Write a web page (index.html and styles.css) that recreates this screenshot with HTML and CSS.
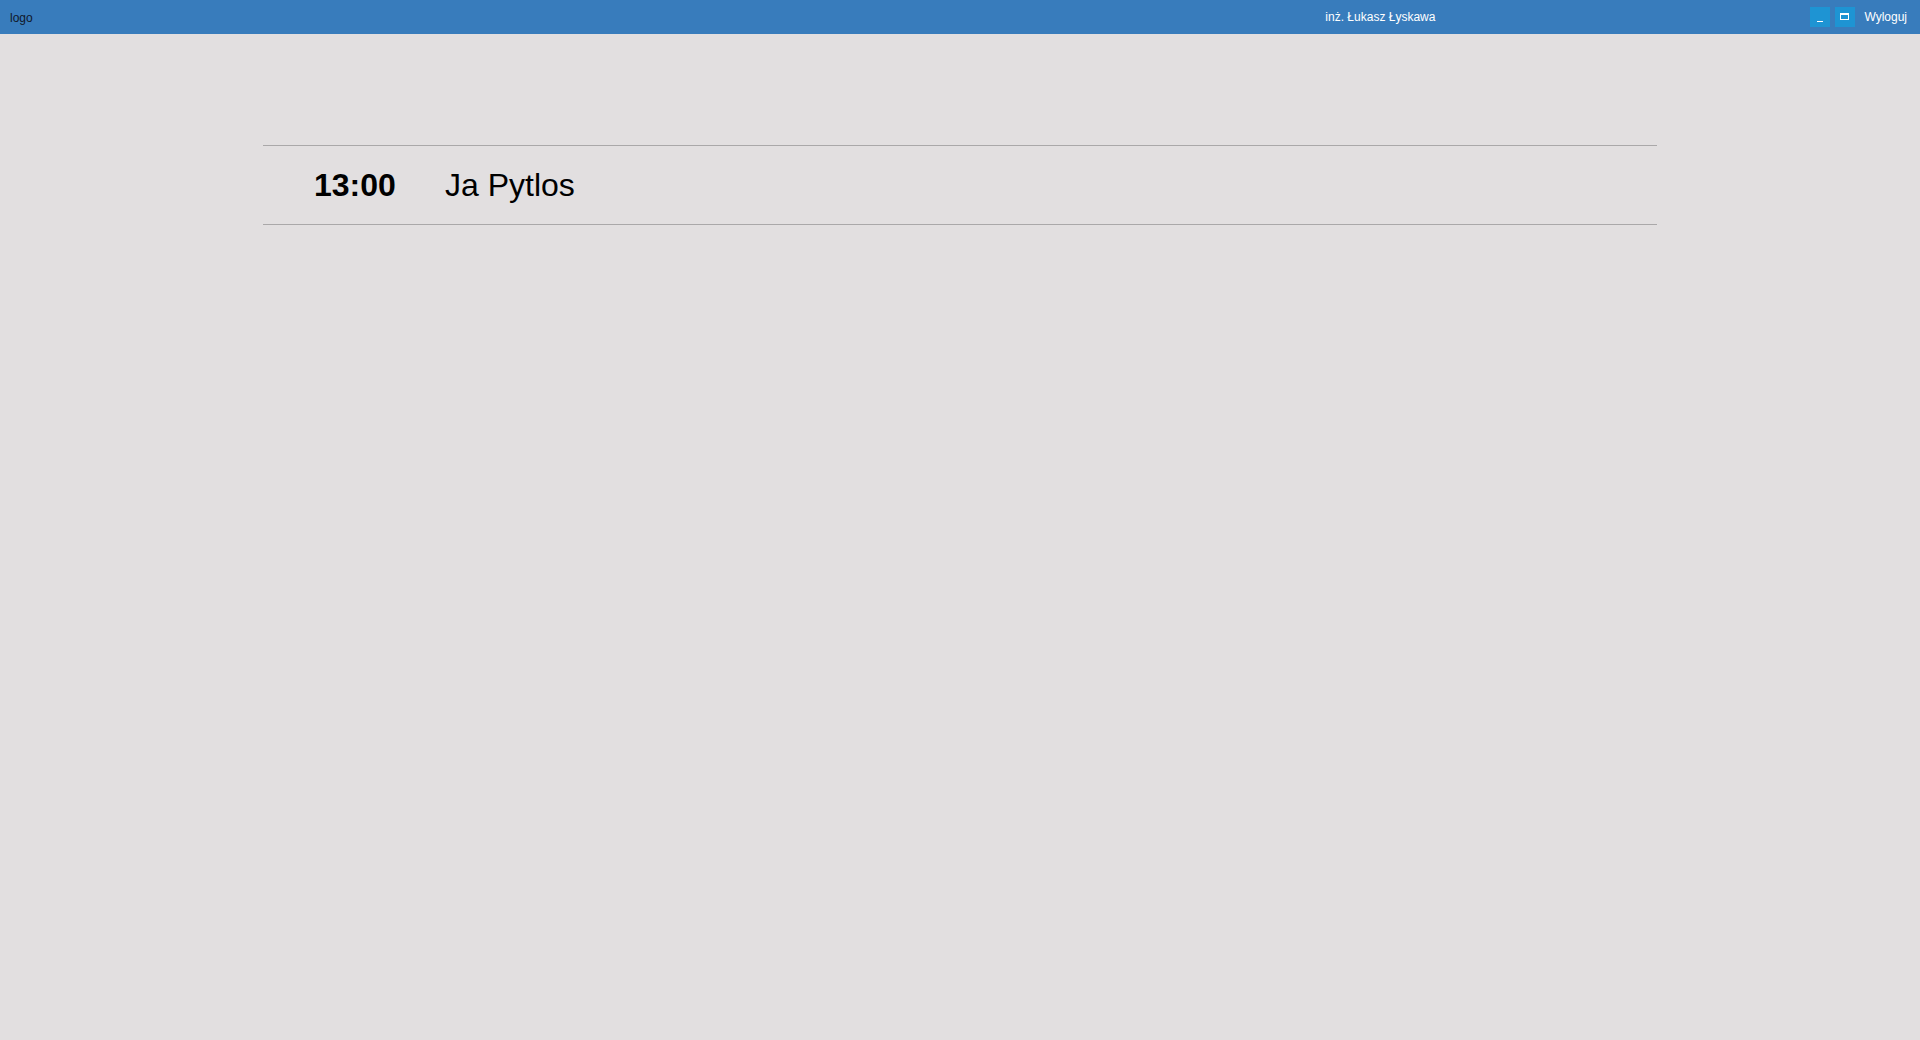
FILE: index.html
```html
<!DOCTYPE html>
<html lang="pl">
<head>
<meta charset="utf-8">
<title>Plan</title>
<link rel="stylesheet" href="styles.css">
</head>
<body>
<header class="topbar">
  <div class="logo">logo</div>
  <div class="spacer"></div>
  <div class="user">inż. Łukasz Łyskawa</div>
  <div class="controls">
    <button class="winbtn" type="button" aria-label="minimalizuj">
      <svg width="20" height="20" viewBox="0 0 20 20"><rect x="7" y="14" width="6" height="1" fill="#fff"/></svg>
    </button>
    <button class="winbtn" type="button" aria-label="maksymalizuj">
      <svg width="20" height="20" viewBox="0 0 20 20"><rect x="5.5" y="6.5" width="8" height="6" fill="none" stroke="#fff" stroke-width="1"/><rect x="5" y="6" width="9" height="2" fill="#fff"/></svg>
    </button>
  </div>
  <div class="logout">Wyloguj</div>
</header>
<main class="content">
  <div class="schedule">
    <div class="row">
      <div class="time">13:00</div>
      <div class="name">Ja Pytlos</div>
    </div>
  </div>
</main>
</body>
</html>
```

FILE: styles.css
```css
html, body {
  margin: 0;
  padding: 0;
}
body {
  background: #e2dfe0;
  font-family: "Liberation Sans", Arial, sans-serif;
  color: #000;
  min-height: 1040px;
}
.topbar {
  height: 34px;
  background: #387cbc;
  display: flex;
  align-items: center;
  padding: 0 13px 0 10px;
  font-size: 12px;
}
.logo {
  color: #10182a;
  padding-top: 2px;
}
.spacer {
  flex: 1;
}
.user {
  color: #fff;
  margin-right: 375px;
}
.controls {
  display: flex;
  gap: 5px;
}
.winbtn {
  width: 20px;
  height: 20px;
  padding: 0;
  border: 0;
  background: #1e94d3;
  display: block;
}
.winbtn svg {
  display: block;
}
.logout {
  color: #fff;
  margin-left: 9px;
}
.content {
  padding-top: 111px;
}
.schedule {
  width: 1394px;
  margin: 0 auto;
  border-top: 1px solid #aaa8a9;
  border-bottom: 1px solid #aaa8a9;
}
.row {
  height: 78px;
  display: flex;
  align-items: center;
  padding-left: 51px;
  font-size: 32px;
}
.time {
  font-weight: bold;
  width: 131px;
}
```
